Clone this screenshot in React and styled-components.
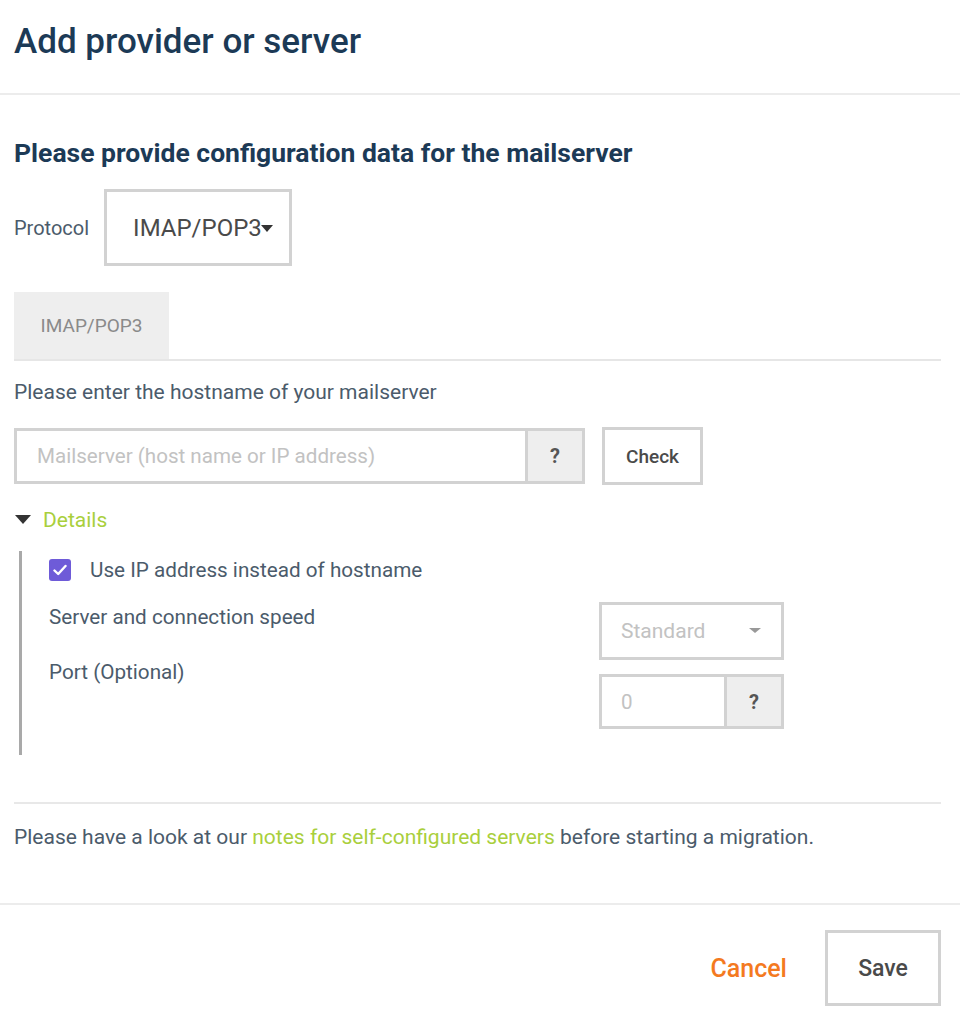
import React, { useState } from 'react';
import styled, { createGlobalStyle } from 'styled-components';

const GlobalStyle = createGlobalStyle`
  body {
    margin: 0;
    background: #fff;
    font-family: Roboto, "Open Sans", sans-serif;
    color: #4b5b6b;
  }
  * { box-sizing: border-box; }
`;

const Modal = styled.div`
  width: 960px;
  background: #fff;
`;

const Header = styled.header`
  height: 95px;
  display: flex;
  align-items: center;
  padding: 0 14px 10px;
  border-bottom: 2px solid #ececec;
`;

const Title = styled.h1`
  margin: 0;
  font-size: 35px;
  font-weight: 500;
  color: #1c3a56;
`;

const Body = styled.div`
  padding: 42px 19px 0 14px;
`;

const Subtitle = styled.h2`
  margin: 0 0 21px;
  font-size: 26.5px;
  font-weight: 700;
  color: #1c3a56;
`;

const ProtocolRow = styled.div`
  display: flex;
  align-items: center;
  gap: 15px;
`;

const Label = styled.span`
  font-size: 20px;
  color: #4b5b6b;
`;

const SelectBox = styled.div`
  position: relative;
  width: ${p => p.width}px;
  height: ${p => p.height}px;
  border: 3px solid #d2d2d2;
  display: flex;
  align-items: center;
  padding-left: ${p => p.pad}px;
  font-size: ${p => p.size}px;
  color: ${p => p.muted ? '#c2c2c2' : '#4a4a4a'};
  background: #fff;
`;

const Caret = styled.span`
  position: absolute;
  right: ${p => p.right}px;
  top: 50%;
  margin-top: -3px;
  width: 0;
  height: 0;
  border-left: ${p => p.w}px solid transparent;
  border-right: ${p => p.w}px solid transparent;
  border-top: ${p => p.h}px solid ${p => p.color};
`;

const Tabs = styled.div`
  display: flex;
  margin-top: 26px;
  border-bottom: 2px solid #e6e6e6;
`;

const Tab = styled.button`
  width: 155px;
  height: 67px;
  border: none;
  background: ${p => p.active ? '#eeeeee' : 'transparent'};
  font-family: inherit;
  font-size: 19px;
  color: #8a8a8a;
  cursor: pointer;
`;

const FieldLabel = styled.div`
  margin-top: 19px;
  font-size: 21px;
  color: #4b5b6b;
`;

const InputRow = styled.div`
  display: flex;
  align-items: center;
  gap: 17px;
  margin-top: 23px;
`;

const InputGroup = styled.div`
  display: flex;
  width: ${p => p.width}px;
  height: ${p => p.height}px;
  border: 3px solid #d2d2d2;
  background: #fff;
`;

const TextInput = styled.input`
  flex: 1;
  min-width: 0;
  border: none;
  outline: none;
  padding: 0 0 0 ${p => p.pad}px;
  font-family: inherit;
  font-size: 20.6px;
  color: #4a4a4a;
  background: transparent;

  &::placeholder {
    color: #c2c2c2;
  }
`;

const Addon = styled.span`
  width: ${p => p.width}px;
  border-left: 3px solid #d2d2d2;
  background: #eeeeee;
  display: flex;
  align-items: center;
  justify-content: center;
  font-size: 20px;
  font-weight: 700;
  color: #555;
`;

const OutlineButton = styled.button`
  width: ${p => p.width}px;
  height: ${p => p.height}px;
  border: 3px solid #d2d2d2;
  background: #fff;
  font-family: inherit;
  font-size: ${p => p.size}px;
  font-weight: 500;
  color: #4a4a4a;
  cursor: pointer;
`;

const DetailsToggle = styled.button`
  display: flex;
  align-items: center;
  gap: 12px;
  margin-top: 23px;
  padding: 0 0 0 1px;
  border: none;
  background: none;
  font-family: inherit;
  font-size: 21px;
  color: #a9cf3c;
  cursor: pointer;
`;

const DetailsPanel = styled.div`
  margin: 19px 0 0 5px;
  padding: 7px 0 26px 27px;
  border-left: 3px solid #a9a9a9;
`;

const CheckRow = styled.label`
  display: flex;
  align-items: center;
  gap: 19px;
  font-size: 20.7px;
  color: #4b5b6b;
`;

const CheckBox = styled.span`
  width: 22px;
  height: 22px;
  border-radius: 3px;
  background: ${p => p.checked ? '#6e5bd8' : '#fff'};
  border: ${p => p.checked ? 'none' : '2px solid #c8c8c8'};
  display: flex;
  align-items: center;
  justify-content: center;
`;

const OptionRow = styled.div`
  display: grid;
  grid-template-columns: 550px 185px;
  margin-top: ${p => p.top}px;
`;

const OptionLabel = styled.div`
  padding-top: ${p => p.offset}px;
  font-size: 20.7px;
  color: #4b5b6b;
`;

const Control = styled.div`
  padding-top: ${p => p.offset}px;
`;

const Divider = styled.hr`
  margin: 47px 0 0;
  border: none;
  border-top: 2px solid #e8e8e8;
`;

const Notes = styled.p`
  margin: 21px 0 0;
  font-size: 21px;
  color: #4b5b6b;
`;

const Link = styled.a`
  color: #a9cf3c;
  text-decoration: none;
`;

const Footer = styled.footer`
  margin-top: 54px;
  border-top: 2px solid #ececec;
  padding: 25px 19px 0 0;
  display: flex;
  justify-content: flex-end;
  align-items: center;
  gap: 38px;
`;

const CancelButton = styled.button`
  border: none;
  background: none;
  padding: 0;
  font-family: inherit;
  font-size: 25px;
  font-weight: 500;
  color: #f47a1f;
  cursor: pointer;
`;

const CheckMark = () => (
  <svg width="14" height="12" viewBox="0 0 14 12">
    <path d="M1.5 6.5 L5.2 10 L12.5 2" fill="none" stroke="#fff" strokeWidth="2.4" strokeLinecap="round" strokeLinejoin="round" />
  </svg>
);

const Triangle = () => (
  <svg width="16" height="10" viewBox="0 0 16 10">
    <path d="M0 0 H16 L8 9 Z" fill="#333" />
  </svg>
);

export default function App() {
  const [useIp, setUseIp] = useState(true);

  return (
    <>
      <GlobalStyle />
      <Modal>
        <Header>
          <Title>Add provider or server</Title>
        </Header>

        <Body>
          <Subtitle>Please provide configuration data for the mailserver</Subtitle>

          <ProtocolRow>
            <Label>Protocol</Label>
            <SelectBox width={188} height={77} pad={26} size={24}>
              IMAP/POP3
              <Caret right={16} w={6} h={7} color="#333" />
            </SelectBox>
          </ProtocolRow>

          <Tabs>
            <Tab active>IMAP/POP3</Tab>
          </Tabs>

          <FieldLabel>Please enter the hostname of your mailserver</FieldLabel>

          <InputRow>
            <InputGroup width={571} height={56}>
              <TextInput pad={20} placeholder="Mailserver (host name or IP address)" />
              <Addon width={57}>?</Addon>
            </InputGroup>
            <OutlineButton width={101} height={58} size={19}>Check</OutlineButton>
          </InputRow>

          <DetailsToggle>
            <Triangle />
            Details
          </DetailsToggle>

          <DetailsPanel>
            <CheckRow onClick={() => setUseIp(!useIp)}>
              <CheckBox checked={useIp}>{useIp && <CheckMark />}</CheckBox>
              Use IP address instead of hostname
            </CheckRow>

            <OptionRow top={20}>
              <OptionLabel offset={3}>Server and connection speed</OptionLabel>
              <Control>
                <SelectBox width={185} height={58} pad={19} size={21} muted>
                  Standard
                  <Caret right={20} w={6} h={5} color="#999" />
                </SelectBox>
              </Control>
            </OptionRow>

            <OptionRow top={0}>
              <OptionLabel offset={0}>Port (Optional)</OptionLabel>
              <Control offset={14}>
                <InputGroup width={185} height={55}>
                  <TextInput pad={19} placeholder="0" />
                  <Addon width={57}>?</Addon>
                </InputGroup>
              </Control>
            </OptionRow>
          </DetailsPanel>

          <Divider />

          <Notes>
            Please have a look at our <Link href="#">notes for self-configured servers</Link> before starting a migration.
          </Notes>
        </Body>

        <Footer>
          <CancelButton>Cancel</CancelButton>
          <OutlineButton width={116} height={76} size={23}>Save</OutlineButton>
        </Footer>
      </Modal>
    </>
  );
}
